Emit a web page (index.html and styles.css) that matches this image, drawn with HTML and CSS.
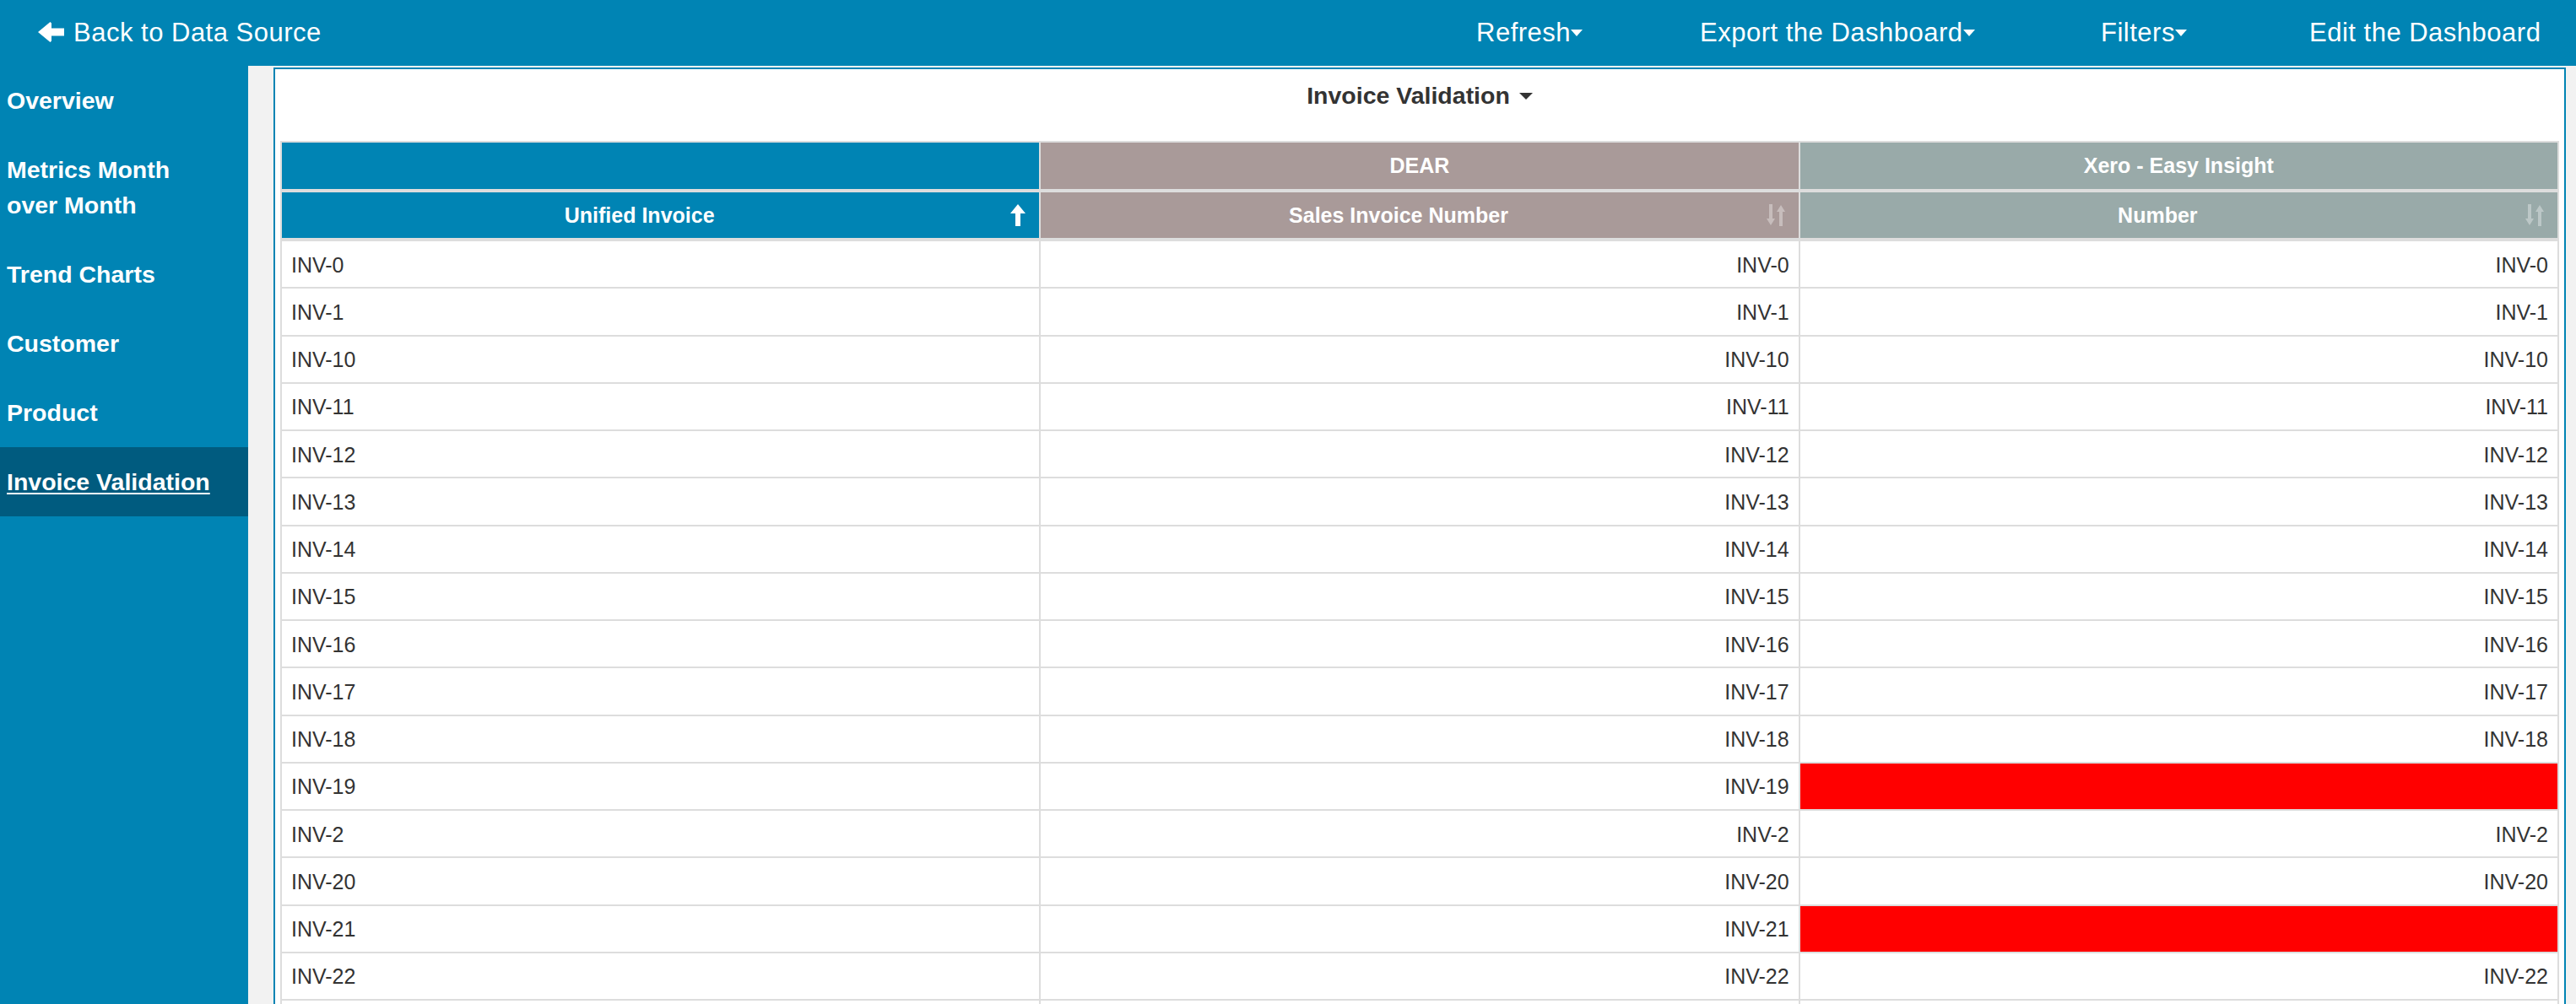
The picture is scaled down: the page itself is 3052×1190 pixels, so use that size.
FILE: index.html
```html
<!DOCTYPE html>
<html lang="en">
<head>
<meta charset="utf-8">
<title>Invoice Validation</title>
<link rel="stylesheet" href="styles.css">
</head>
<body>
<header class="topbar">
  <a class="back">
    <svg class="back-icon" viewBox="0 0 31 24" aria-hidden="true"><path d="M0 12 L14.5 0 L16 1.5 L16 7.5 L31 7.5 L31 16.5 L16 16.5 L16 22.5 L14.5 24 Z" fill="#fff"/></svg>
    <span>Back to Data Source</span>
  </a>
  <nav class="nav">
    <span class="nav-item w-refresh">Refresh<i class="caret"></i></span>
    <span class="nav-item w-export">Export the Dashboard<i class="caret"></i></span>
    <span class="nav-item w-filters">Filters<i class="caret"></i></span>
    <span class="nav-item w-edit">Edit the Dashboard</span>
  </nav>
</header>
<div class="main">
  <aside class="sidebar">
    <div class="side-item">Overview</div>
    <div class="side-item">Metrics Month over Month</div>
    <div class="side-item">Trend Charts</div>
    <div class="side-item">Customer</div>
    <div class="side-item">Product</div>
    <div class="side-item active">Invoice Validation</div>
  </aside>
  <section class="content">
    <div class="panel">
      <div class="panel-title">Invoice Validation<i class="title-caret"></i></div>
      <div class="grid">
        <div class="cell hcell h1 bg-blue"></div>
        <div class="cell hcell h1 bg-dear">DEAR</div>
        <div class="cell hcell h1 bg-xero">Xero - Easy Insight</div>

        <div class="cell hcell h2 bg-blue">Unified Invoice
          <svg class="sort-icon up" viewBox="0 0 18 26" aria-hidden="true"><path d="M9 0 L18 11 L12 11 L12 26 L6 26 L6 11 L0 11 Z" fill="#fff"/></svg>
        </div>
        <div class="cell hcell h2 bg-dear">Sales Invoice Number
          <svg class="sort-icon both" viewBox="0 0 22 26" aria-hidden="true"><path d="M3 0 H7 V17 H10 L5 25 L0 17 H3 Z M15 26 H19 V9 H22 L17 1 L12 9 H15 Z" fill="rgba(255,255,255,0.35)"/></svg>
        </div>
        <div class="cell hcell h2 bg-xero">Number
          <svg class="sort-icon both" viewBox="0 0 22 26" aria-hidden="true"><path d="M3 0 H7 V17 H10 L5 25 L0 17 H3 Z M15 26 H19 V9 H22 L17 1 L12 9 H15 Z" fill="rgba(255,255,255,0.35)"/></svg>
        </div>

        <div class="cell">INV-0</div><div class="cell right">INV-0</div><div class="cell right">INV-0</div>
        <div class="cell">INV-1</div><div class="cell right">INV-1</div><div class="cell right">INV-1</div>
        <div class="cell">INV-10</div><div class="cell right">INV-10</div><div class="cell right">INV-10</div>
        <div class="cell">INV-11</div><div class="cell right">INV-11</div><div class="cell right">INV-11</div>
        <div class="cell">INV-12</div><div class="cell right">INV-12</div><div class="cell right">INV-12</div>
        <div class="cell">INV-13</div><div class="cell right">INV-13</div><div class="cell right">INV-13</div>
        <div class="cell">INV-14</div><div class="cell right">INV-14</div><div class="cell right">INV-14</div>
        <div class="cell">INV-15</div><div class="cell right">INV-15</div><div class="cell right">INV-15</div>
        <div class="cell">INV-16</div><div class="cell right">INV-16</div><div class="cell right">INV-16</div>
        <div class="cell">INV-17</div><div class="cell right">INV-17</div><div class="cell right">INV-17</div>
        <div class="cell">INV-18</div><div class="cell right">INV-18</div><div class="cell right">INV-18</div>
        <div class="cell">INV-19</div><div class="cell right">INV-19</div><div class="cell right missing"></div>
        <div class="cell">INV-2</div><div class="cell right">INV-2</div><div class="cell right">INV-2</div>
        <div class="cell">INV-20</div><div class="cell right">INV-20</div><div class="cell right">INV-20</div>
        <div class="cell">INV-21</div><div class="cell right">INV-21</div><div class="cell right missing"></div>
        <div class="cell">INV-22</div><div class="cell right">INV-22</div><div class="cell right">INV-22</div>
        <div class="cell"></div><div class="cell right"></div><div class="cell right"></div>
      </div>
    </div>
  </section>
</div>
</body>
</html>
```
FILE: styles.css
```css
* { box-sizing: border-box; }

html, body {
  margin: 0;
  padding: 0;
}

body {
  width: 3052px;
  height: 1190px;
  overflow: hidden;
  font-family: "Liberation Sans", Arial, Helvetica, sans-serif;
  background: #f2f2f2;
}

/* ---------- top bar ---------- */
.topbar {
  height: 78px;
  background: #0084b4;
  color: #fff;
  display: flex;
  align-items: center;
  padding-left: 45px;
  font-size: 31px;
  letter-spacing: 0.5px;
}

.back {
  display: flex;
  align-items: center;
  white-space: nowrap;
}

.back-icon {
  width: 31px;
  height: 24px;
  margin-right: 11px;
  margin-top: -2px;
}

.nav {
  margin-left: auto;
  display: flex;
}

.nav-item {
  white-space: nowrap;
}

.w-refresh { width: 265px; }
.w-export  { width: 475px; }
.w-filters { width: 247px; }
.w-edit    { width: 316px; }

.caret {
  display: inline-block;
  width: 0;
  height: 0;
  border-top: 8px solid #fff;
  border-left: 7.5px solid transparent;
  border-right: 7.5px solid transparent;
  vertical-align: middle;
  margin-top: -4px;
}

/* ---------- layout ---------- */
.main {
  display: flex;
  height: 1112px;
}

.sidebar {
  width: 294px;
  flex: none;
  background: #0084b4;
}

.side-item {
  padding: 20px 34px 20px 8px;
  line-height: 42px;
  font-size: 28.5px;
  font-weight: bold;
  color: #fff;
}

.side-item.active {
  background: #005b7f;
  text-decoration: underline;
  text-decoration-thickness: 2px;
  text-underline-offset: 3px;
}

.content {
  flex: 1;
  min-width: 0;
  background: #f2f2f2;
  padding: 2px 12px 0 30px;
  overflow: hidden;
}

.panel {
  border: 2px solid #0084b4;
  background: #fff;
  padding: 0 6px;
  height: 1200px;
  overflow: hidden;
}

.panel-title {
  height: 85px;
  padding-top: 11px;
  line-height: 40px;
  text-align: center;
  font-size: 28.5px;
  font-weight: bold;
  color: #333;
}

.title-caret {
  display: inline-block;
  width: 0;
  height: 0;
  border-top: 8px solid #333;
  border-left: 8px solid transparent;
  border-right: 8px solid transparent;
  vertical-align: middle;
  margin-left: 11px;
  margin-top: -2px;
}

/* ---------- table ---------- */
.grid {
  display: grid;
  grid-template-columns: repeat(3, 1fr);
  border-top: 2px solid #ddd;
  border-left: 2px solid #ddd;
}

.cell {
  height: 56.25px;
  border-right: 2px solid #ddd;
  border-bottom: 2px solid #ddd;
  display: flex;
  align-items: center;
  padding: 2px 11px 0 11px;
  font-size: 25px;
  color: #333;
  white-space: nowrap;
}

.cell.right {
  justify-content: flex-end;
}

.cell.missing {
  background: #ff0000;
}

.hcell {
  position: relative;
  justify-content: center;
  color: #fff;
  font-weight: bold;
  padding: 0;
}

.h1 {
  height: 59px;
  border-bottom-width: 4px;
}

.h2 {
  height: 58px;
  border-bottom-width: 4px;
  padding: 0 58px 0 8px;
}

.bg-blue { background: #0084b4; }
.bg-dear { background: #a99a99; }
.bg-xero { background: #99aaa9; }

.sort-icon {
  position: absolute;
  right: 16px;
  top: 50%;
  transform: translateY(-50%);
  height: 26px;
}

.sort-icon.up { width: 18px; }
.sort-icon.both { width: 22px; }
```
